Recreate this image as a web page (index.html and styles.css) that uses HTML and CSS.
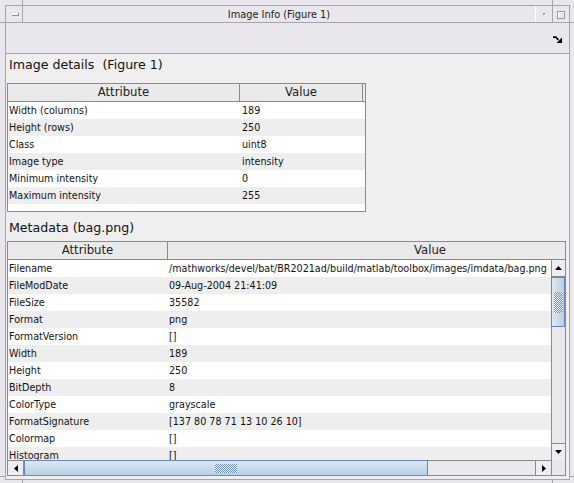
FILE: index.html
```html
<!DOCTYPE html>
<html>
<head>
<meta charset="utf-8">
<title>Image Info (Figure 1)</title>
<link rel="stylesheet" href="styles.css">
</head>
<body>
<div class="window">
  <span class="mark mv m-tl"></span>
  <span class="mark mh m-lt"></span>
  <span class="mark mv m-tr"></span>
  <span class="mark mh m-rt"></span>
  <span class="mark mh m-lb"></span>
  <span class="mark mv m-bl"></span>
  <span class="mark mv m-br"></span>
  <span class="mark mh m-rb"></span>
  <div class="frame">
    <div class="titlebar">
      <div class="tb-menu"><span class="minus"></span></div>
      <div class="title">Image Info (Figure 1)</div>
      <div class="tb-min"><span class="dot"></span></div>
      <div class="tb-max"><span class="sq"></span></div>
    </div>
    <div class="toolbar">
      <svg class="undock" width="9" height="7" viewBox="0 0 9 7"><path d="M0 1.2h2.8l2.6 2.6" stroke="#000" stroke-width="1.7" fill="none"/><path d="M9 1.6V7H3.6z" fill="#000"/></svg>
    </div>
    <div class="content">
      <div class="heading h1">Image details  (Figure 1)</div>
      <div class="table t1">
        <div class="thead">
          <div class="th c1">Attribute</div>
          <div class="th c2">Value</div>
        </div>
        <div class="tbody">
          <div class="row"><div class="td c1">Width (columns)</div><div class="td c2">189</div></div>
          <div class="row"><div class="td c1">Height (rows)</div><div class="td c2">250</div></div>
          <div class="row"><div class="td c1">Class</div><div class="td c2">uint8</div></div>
          <div class="row"><div class="td c1">Image type</div><div class="td c2">intensity</div></div>
          <div class="row"><div class="td c1">Minimum intensity</div><div class="td c2">0</div></div>
          <div class="row"><div class="td c1">Maximum intensity</div><div class="td c2">255</div></div>
        </div>
      </div>
      <div class="heading h2">Metadata (bag.png)</div>
      <div class="pane">
        <div class="hview">
          <div class="thead wide">
            <div class="th c1">Attribute</div>
            <div class="th c2">Value</div>
          </div>
        </div>
        <div class="corner-top"></div>
        <div class="bview">
          <div class="tbody wide">
            <div class="row"><div class="td c1">Filename</div><div class="td c2">/mathworks/devel/bat/BR2021ad/build/matlab/toolbox/images/imdata/bag.png</div></div>
            <div class="row"><div class="td c1">FileModDate</div><div class="td c2">09-Aug-2004 21:41:09</div></div>
            <div class="row"><div class="td c1">FileSize</div><div class="td c2">35582</div></div>
            <div class="row"><div class="td c1">Format</div><div class="td c2">png</div></div>
            <div class="row"><div class="td c1">FormatVersion</div><div class="td c2">[]</div></div>
            <div class="row"><div class="td c1">Width</div><div class="td c2">189</div></div>
            <div class="row"><div class="td c1">Height</div><div class="td c2">250</div></div>
            <div class="row"><div class="td c1">BitDepth</div><div class="td c2">8</div></div>
            <div class="row"><div class="td c1">ColorType</div><div class="td c2">grayscale</div></div>
            <div class="row"><div class="td c1">FormatSignature</div><div class="td c2">[137 80 78 71 13 10 26 10]</div></div>
            <div class="row"><div class="td c1">Colormap</div><div class="td c2">[]</div></div>
            <div class="row"><div class="td c1">Histogram</div><div class="td c2">[]</div></div>
          </div>
        </div>
        <div class="vscroll">
          <div class="sbtn vup"><svg width="7" height="4" viewBox="0 0 7 4"><polygon points="0,4 7,4 3.5,0" fill="#000"/></svg></div>
          <div class="vthumb"><span class="grip vgrip"></span></div>
          <div class="track"></div>
          <div class="sbtn vdown"><svg width="7" height="4" viewBox="0 0 7 4"><polygon points="0,0 7,0 3.5,4" fill="#000"/></svg></div>
        </div>
        <div class="hscroll">
          <div class="sbtn hleft"><svg width="4" height="7" viewBox="0 0 4 7"><polygon points="4,0 4,7 0,3.5" fill="#000"/></svg></div>
          <div class="hthumb"><span class="grip hgrip"></span></div>
          <div class="track"></div>
          <div class="sbtn hright"><svg width="4" height="7" viewBox="0 0 4 7"><polygon points="0,0 0,7 4,3.5" fill="#000"/></svg></div>
        </div>
        <div class="corner-bot"></div>
      </div>
    </div>
  </div>
</div>
</body>
</html>
```
FILE: styles.css
```css
* { box-sizing: border-box; }
html, body { margin: 0; padding: 0; }
body {
  width: 574px;
  height: 483px;
  overflow: hidden;
  background: #e9e7ed;
  font-family: "DejaVu Sans", sans-serif;
  color: #111;
}
.window {
  position: relative;
  width: 574px;
  height: 483px;
  padding: 5px 4px 3px 5px;
}
.mark { position: absolute; background: #a6a6a8; }
.mv { width: 1px; height: 5px; }
.mh { width: 5px; height: 1px; }
.m-tl { left: 22px; top: 0; }
.m-tr { left: 552px; top: 0; }
.m-lt { left: 0; top: 22px; }
.m-rt { left: 570px; top: 22px; }
.m-lb { left: 0; top: 476px; }
.m-rb { left: 570px; top: 476px; }
.m-bl { left: 22px; top: 480px; height: 3px; }
.m-br { left: 552px; top: 480px; height: 3px; }

.frame {
  width: 565px;
  height: 475px;
  border: 1px solid #a6a6a8;
  display: flex;
  flex-direction: column;
}
.titlebar {
  flex: none;
  height: 17px;
  display: flex;
  border-bottom: 1px solid #a6a6a8;
}
.tb-menu {
  width: 17px;
  border-right: 1px solid #a6a6a8;
}
.minus {
  display: block;
  width: 7px;
  height: 3px;
  margin: 7px 0 0 6px;
  background: #fff;
  border-bottom: 1px solid #8e8e90;
  border-right: 1px solid #8e8e90;
}
.title {
  flex: 1;
  text-align: center;
  font-size: 9.8px;
  line-height: 15px;
  padding-top: 1px;
  color: #1a1a1a;
}
.tb-min {
  width: 18px;
  border-left: 1px solid #fff;
  border-right: 1px solid #a6a6a8;
}
.dot {
  display: block;
  width: 2px;
  height: 2px;
  margin: 7px 0 0 7px;
  background: #9a9a9c;
  box-shadow: 1px 1px 0 #fff;
}
.tb-max { width: 16px; }
.sq {
  display: block;
  width: 8px;
  height: 8px;
  margin: 5px 0 0 4px;
  border: 1px solid #9c9c9e;
  box-shadow: inset 1px 1px 0 #fff;
}
.toolbar {
  flex: none;
  height: 31px;
  border-bottom: 1px solid #a6a6a8;
  display: flex;
  justify-content: flex-end;
  align-items: flex-start;
  padding: 13px 7px 0 0;
}
.undock { display: block; }

.content {
  flex: 1;
  background: #efefef;
  padding-left: 1px;
}
.heading {
  font-size: 12.6px;
  line-height: 18px;
  padding-left: 2px;
  white-space: pre;
  color: #111;
}
.h1 { margin-top: 2px; }
.t1 { margin-top: 9px; }
.h2 { margin-top: 7px; }
.pane { margin-top: 4px; }

.table {
  width: 359px;
  height: 129px;
  border: 1px solid #8a8a8a;
  background: #fff;
}
.thead {
  display: flex;
  height: 18px;
  background: #eaeaea;
  border-bottom: 1px solid #8a8a8a;
}
.th {
  height: 17px;
  font-size: 11.7px;
  line-height: 17px;
  text-align: center;
  border-right: 1px solid #8a8a8a;
  color: #222;
  white-space: nowrap;
}
.t1 .th.c1, .t1 .td.c1 { width: 232px; flex: none; }
.t1 .th.c2 { width: 123px; }
.row {
  display: flex;
  height: 17px;
  line-height: 17px;
  font-size: 9.6px;
  background: #fff;
}
.row:nth-child(even) { background: #eeeeee; }
.td {
  white-space: nowrap;
  overflow: hidden;
  padding-left: 1px;
}
.td.c2 { flex: 1; }
.t1 .td.c2 { padding-left: 2px; }

.pane {
  width: 559px;
  height: 235px;
  border: 1px solid #8a8a8a;
  background: #fff;
  display: grid;
  grid-template-columns: 543px 14px;
  grid-template-rows: 18px 200px 15px;
}
.hview, .bview { overflow: hidden; }
.wide { width: 685px; }
.wide .c1 { width: 160px; flex: none; }
.thead.wide .th.c2 { width: 525px; }
.corner-top {
  background: #eaeaea;
  border-bottom: 1px solid #8a8a8a;
}

.vscroll {
  display: flex;
  flex-direction: column;
  border-left: 1px solid #8c8c8c;
  background: #e9e8ec;
}
.sbtn {
  display: flex;
  align-items: center;
  justify-content: center;
  background: #eeedf1;
  flex: none;
}
.sbtn svg { display: block; }
.vup { height: 17px; border-bottom: 1px solid #8c8c8c; }
.vdown { height: 17px; border-top: 1px solid #8c8c8c; }
.vthumb {
  height: 50px;
  flex: none;
  margin-left: -1px;
  border: 1px solid #6a86b8;
  background: linear-gradient(to right, #dde8f3, #b8cfe5);
  display: flex;
  align-items: center;
  justify-content: center;
}
.track { flex: 1; background: #e9e8ec; }
.grip {
  display: block;
  background: repeating-conic-gradient(#7090c4 0 25%, rgba(255,255,255,0.6) 0 50%) 0 0 / 2px 2px;
}
.vgrip { width: 9px; height: 21px; }
.hgrip { width: 22px; height: 9px; }

.hscroll {
  display: flex;
  background: #e9e8ec;
}
.hscroll > * { border-top: 1px solid #8c8c8c; }
.hleft { width: 16px; border-right: 1px solid #8c8c8c; }
.hright { width: 16px; border-left: 1px solid #8c8c8c; }
.hscroll > .hthumb {
  width: 404px;
  flex: none;
  border: 1px solid #6a86b8;
  border-bottom: none;
  background: linear-gradient(to bottom, #dde8f3, #b8cfe5);
  display: flex;
  align-items: center;
  justify-content: center;
}
.corner-bot {
  background: #e9e7ed;
  border-left: 1px solid #8c8c8c;
}
```
